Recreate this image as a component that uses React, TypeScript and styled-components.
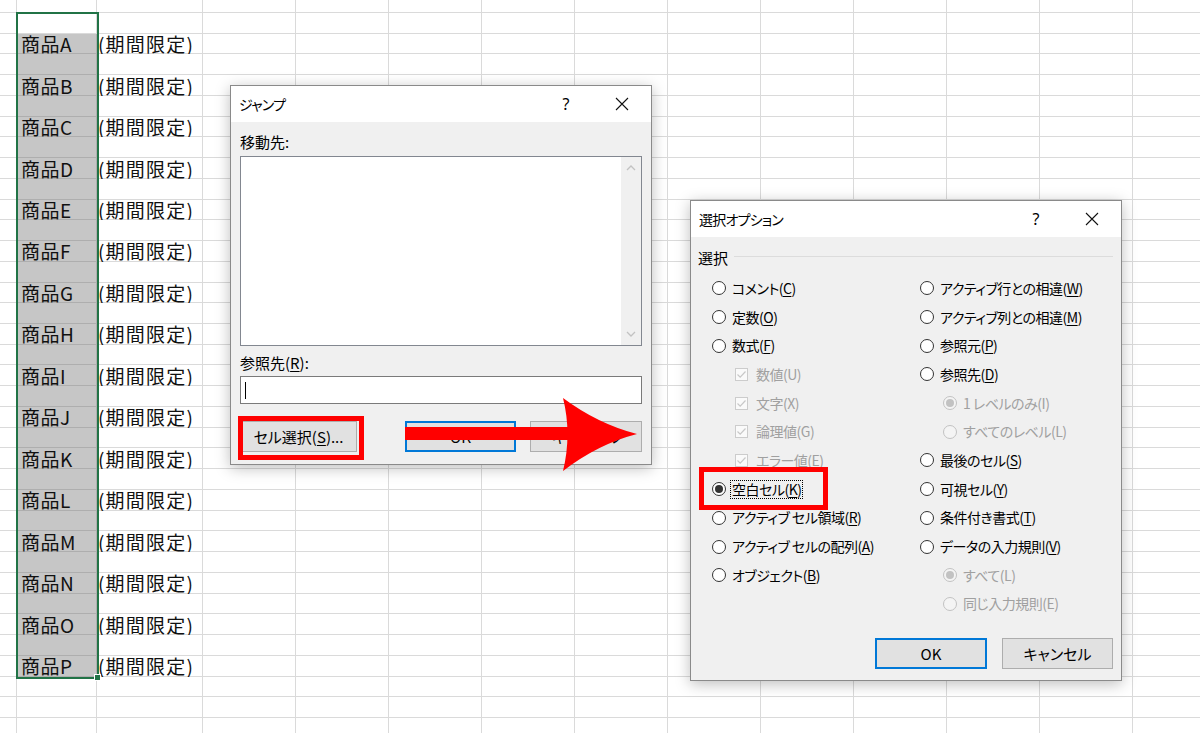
import React from "react";
import styled, { createGlobalStyle } from "styled-components";

const GlobalStyle = createGlobalStyle`
  html, body {
    margin: 0;
    padding: 0;
    background: #ffffff;
  }
  body {
    width: 1200px;
    height: 733px;
    overflow: hidden;
    font-family: "Noto Sans CJK JP", "Noto Sans", sans-serif;
  }
`;

const COLS = [17, 80, 106, 93, 93, 93, 93, 93, 93, 93, 93, 93, 93, 93];
const ROW_COUNT = 36;
const LETTERS = "ABCDEFGHIJKLMNOP".split("");

const Page = styled.div`
  position: relative;
  width: 1200px;
  height: 733px;
  overflow: hidden;
  background: #ffffff;
  font-family: "Noto Sans CJK JP", "Noto Sans", sans-serif;
`;

const Sheet = styled.div`
  display: grid;
  grid-template-columns: ${COLS.map((c) => `${c}px`).join(" ")};
  grid-template-rows: 13px repeat(${ROW_COUNT - 1}, 20.74px);
  width: 1200px;
  height: 733px;
  overflow: hidden;
`;

const SheetCell = styled.div<{ $selected?: boolean; $pad: number; $spacing: number }>`
  box-sizing: border-box;
  border-right: 1px solid ${(p) => (p.$selected ? "#aeaeae" : "#dadada")};
  border-bottom: 1px solid ${(p) => (p.$selected ? "#aeaeae" : "#dadada")};
  background: ${(p) => (p.$selected ? "#c6c6c6" : "#ffffff")};
  display: flex;
  align-items: center;
  padding-left: ${(p) => p.$pad}px;
  font-size: 19px;
  line-height: 19px;
  letter-spacing: ${(p) => p.$spacing}px;
  color: #111;
  white-space: nowrap;
  overflow: visible;
`;

const SelectionFrame = styled.div`
  position: absolute;
  left: 16px;
  top: 12px;
  width: 83px;
  height: 667px;
  box-sizing: border-box;
  border: 2px solid #217346;
  pointer-events: none;
`;

const FillHandle = styled.div`
  position: absolute;
  left: 94px;
  top: 674px;
  width: 7px;
  height: 7px;
  box-sizing: border-box;
  background: #217346;
  border: 1px solid #ffffff;
`;

const DialogWindow = styled.div<{ $left: number; $top: number; $width: number; $height: number }>`
  position: absolute;
  left: ${(p) => p.$left}px;
  top: ${(p) => p.$top}px;
  width: ${(p) => p.$width}px;
  height: ${(p) => p.$height}px;
  box-sizing: border-box;
  border: 1px solid #8a8a8a;
  background: #f0f0f0;
  box-shadow: 0 3px 14px rgba(0, 0, 0, 0.26);
  display: flex;
  flex-direction: column;
  font-size: 15px;
  color: #000;
  font-feature-settings: "palt" 1;
`;

const TitleBar = styled.div`
  flex: none;
  height: 36px;
  background: #ffffff;
  display: flex;
  align-items: center;
`;

const TitleText = styled.div`
  flex: 1;
  padding-left: 8px;
  font-size: 14px;
  letter-spacing: -0.8px;
`;

const HelpButton = styled.div`
  width: 54px;
  height: 100%;
  display: flex;
  align-items: center;
  justify-content: center;
  font-family: "Noto Sans", sans-serif;
  font-size: 16px;
`;

const CloseButton = styled.div`
  width: 58px;
  height: 100%;
  display: flex;
  align-items: center;
  justify-content: center;
`;

const JumpBody = styled.div`
  flex: 1;
  display: flex;
  flex-direction: column;
  padding: 10px 9px 0 9px;
`;

const FieldLabel = styled.div<{ $gap: number }>`
  height: 20px;
  line-height: 20px;
  margin-top: ${(p) => p.$gap}px;
`;

const Mnemonic = styled.u`
  text-decoration: underline;
  text-decoration-thickness: 1px;
  text-underline-offset: 2px;
`;

const ListBox = styled.div`
  margin-top: 4px;
  height: 190px;
  box-sizing: border-box;
  border: 1px solid #828790;
  background: #ffffff;
  display: flex;
  justify-content: flex-end;
`;

const ScrollTrack = styled.div`
  width: 20px;
  background: #f0f0f0;
  display: flex;
  flex-direction: column;
  justify-content: space-between;
  align-items: center;
  padding: 8px 0;
  box-sizing: border-box;
`;

const TextInput = styled.div`
  margin-top: 3px;
  height: 28px;
  box-sizing: border-box;
  border: 1px solid #7a7a7a;
  background: #ffffff;
  display: flex;
  align-items: center;
  padding-left: 4px;
`;

const Caret = styled.span`
  width: 1px;
  height: 17px;
  background: #000;
`;

const ButtonRow = styled.div<{ $gap: number }>`
  margin-top: ${(p) => p.$gap}px;
  display: flex;
  align-items: center;
  gap: 14px;
`;

const Spacer = styled.div`
  flex: 1;
`;

const DialogButton = styled.div<{ $width: number; $primary?: boolean }>`
  position: relative;
  width: ${(p) => p.$width}px;
  height: 31px;
  box-sizing: border-box;
  border: ${(p) => (p.$primary ? "2px solid #0078d7" : "1px solid #adadad")};
  background: #e1e1e1;
  display: flex;
  align-items: center;
  justify-content: center;
  font-size: 15px;
  white-space: nowrap;
`;

const AnnotationBox = styled.div<{ $left: number; $top: number; $width: number; $height: number }>`
  position: absolute;
  left: ${(p) => p.$left}px;
  top: ${(p) => p.$top}px;
  width: ${(p) => p.$width}px;
  height: ${(p) => p.$height}px;
  box-sizing: border-box;
  border: 5px solid #ff0000;
  pointer-events: none;
  z-index: 3;
`;

const OptionsBody = styled.div`
  flex: 1;
  display: flex;
  flex-direction: column;
  padding: 10px 8px 11px 0;
`;

const GroupHeader = styled.div`
  display: flex;
  align-items: center;
  height: 20px;
  padding-left: 7px;
  font-size: 15px;
`;

const GroupRule = styled.div`
  flex: 1;
  height: 1px;
  background: #dcdcdc;
  margin-left: 6px;
  margin-top: -2px;
`;

const OptionColumns = styled.div`
  margin-top: 7px;
  padding-left: 21px;
  display: grid;
  grid-template-columns: 208px 1fr;
`;

const OptionColumn = styled.div`
  display: flex;
  flex-direction: column;
`;

const OptionRow = styled.div<{ $indent: number; $disabled?: boolean }>`
  position: relative;
  height: 28.7px;
  display: flex;
  align-items: center;
  padding-left: ${(p) => p.$indent}px;
  color: ${(p) => (p.$disabled ? "#a0a0a0" : "#000")};
  white-space: nowrap;
`;

const RadioCircle = styled.span<{ $checked?: boolean; $disabled?: boolean }>`
  flex: none;
  width: 14px;
  height: 14px;
  box-sizing: border-box;
  border-radius: 50%;
  border: 1px solid ${(p) => (p.$disabled ? "#c2c2c2" : "#333333")};
  background: ${(p) => (p.$disabled ? "#f4f4f4" : "#ffffff")};
  display: flex;
  align-items: center;
  justify-content: center;
  margin-right: 4px;
  &::after {
    content: "";
    width: 8px;
    height: 8px;
    border-radius: 50%;
    background: ${(p) => (p.$checked ? (p.$disabled ? "#c2c2c2" : "#333333") : "transparent")};
  }
`;

const CheckSquare = styled.span`
  flex: none;
  width: 13px;
  height: 13px;
  box-sizing: border-box;
  border: 1px solid #cccccc;
  background: #fafafa;
  display: flex;
  align-items: center;
  justify-content: center;
  margin-right: 6px;
`;

const OptionLabel = styled.span<{ $focus?: boolean }>`
  display: inline-block;
  padding: 0 1px;
  font-size: 14px;
  letter-spacing: -0.5px;
  line-height: 17px;
  border: 1px ${(p) => (p.$focus ? "dotted #000" : "solid transparent")};
`;

const ArrowOverlay = styled.svg`
  position: absolute;
  left: 0;
  top: 0;
  width: 1200px;
  height: 733px;
  pointer-events: none;
  z-index: 5;
`;

const OptionsButtons = styled.div`
  margin-top: auto;
  display: flex;
  justify-content: flex-end;
  gap: 15px;
`;

function CloseGlyph() {
  return (
    <svg width="14" height="14" viewBox="0 0 14 14">
      <path d="M1 1 L13 13 M13 1 L1 13" stroke="#111" strokeWidth="1.1" fill="none" />
    </svg>
  );
}

function Chevron({ up }: { up?: boolean }) {
  return (
    <svg width="10" height="6" viewBox="0 0 10 6">
      <path
        d={up ? "M1 5 L5 1 L9 5" : "M1 1 L5 5 L9 1"}
        stroke="#c2c2c2"
        strokeWidth="1.3"
        fill="none"
      />
    </svg>
  );
}

function CheckMark() {
  return (
    <svg width="11" height="11" viewBox="0 0 11 11">
      <path d="M1.5 5.5 L4.2 8.2 L9.5 2.5" stroke="#c8c8c8" strokeWidth="1.2" fill="none" />
    </svg>
  );
}

type Opt = {
  text: string;
  key: string;
  kind: "radio" | "check";
  indent?: number;
  checked?: boolean;
  disabled?: boolean;
  focus?: boolean;
  annotate?: boolean;
};

const LEFT_OPTS: Opt[] = [
  { text: "コメント", key: "C", kind: "radio" },
  { text: "定数", key: "O", kind: "radio" },
  { text: "数式", key: "F", kind: "radio" },
  { text: "数値", key: "U", kind: "check", indent: 23, checked: true, disabled: true },
  { text: "文字", key: "X", kind: "check", indent: 23, checked: true, disabled: true },
  { text: "論理値", key: "G", kind: "check", indent: 23, checked: true, disabled: true },
  { text: "エラー値", key: "E", kind: "check", indent: 23, checked: true, disabled: true },
  { text: "空白セル", key: "K", kind: "radio", checked: true, focus: true, annotate: true },
  { text: "アクティブ セル領域", key: "R", kind: "radio" },
  { text: "アクティブ セルの配列", key: "A", kind: "radio" },
  { text: "オブジェクト", key: "B", kind: "radio" },
];

const RIGHT_OPTS: Opt[] = [
  { text: "アクティブ行との相違", key: "W", kind: "radio" },
  { text: "アクティブ列との相違", key: "M", kind: "radio" },
  { text: "参照元", key: "P", kind: "radio" },
  { text: "参照先", key: "D", kind: "radio" },
  { text: "1 レベルのみ", key: "I", kind: "radio", indent: 23, checked: true, disabled: true },
  { text: "すべてのレベル", key: "L", kind: "radio", indent: 23, disabled: true },
  { text: "最後のセル", key: "S", kind: "radio" },
  { text: "可視セル", key: "Y", kind: "radio" },
  { text: "条件付き書式", key: "T", kind: "radio" },
  { text: "データの入力規則", key: "V", kind: "radio" },
  { text: "すべて", key: "L", kind: "radio", indent: 23, checked: true, disabled: true },
  { text: "同じ入力規則", key: "E", kind: "radio", indent: 23, disabled: true },
];

function OptionItem({ o }: { o: Opt }) {
  return (
    <OptionRow $indent={o.indent ?? 0} $disabled={o.disabled}>
      {o.kind === "radio" ? (
        <RadioCircle $checked={o.checked} $disabled={o.disabled} />
      ) : (
        <CheckSquare>{o.checked && <CheckMark />}</CheckSquare>
      )}
      <OptionLabel $focus={o.focus}>
        {o.text}({o.disabled ? o.key : <Mnemonic>{o.key}</Mnemonic>})
      </OptionLabel>
      {o.annotate && <AnnotationBox $left={-13} $top={-8} $width={129} $height={43} />}
    </OptionRow>
  );
}

function SheetGrid() {
  const cells: React.ReactNode[] = [];
  for (let r = 0; r < ROW_COUNT; r++) {
    for (let c = 0; c < COLS.length; c++) {
      const selected = c === 1 && r >= 2 && r <= 32;
      const isItemRow = r >= 2 && r <= 32 && r % 2 === 0;
      let content = "";
      if (isItemRow && c === 1) content = `商品${LETTERS[(r - 2) / 2]}`;
      if (isItemRow && c === 2) content = "(期間限定)";
      cells.push(
        <SheetCell
          key={`${r}-${c}`}
          $selected={selected}
          $pad={c === 1 ? 4 : 1}
          $spacing={c === 2 ? 1.2 : 0.5}
        >
          {content}
        </SheetCell>
      );
    }
  }
  return <Sheet>{cells}</Sheet>;
}

export default function App() {
  return (
    <>
      <GlobalStyle />
      <Page>
        <SheetGrid />
        <SelectionFrame />
        <FillHandle />

        <DialogWindow $left={230} $top={85} $width={422} $height={380}>
          <TitleBar>
            <TitleText>ジャンプ</TitleText>
            <HelpButton>?</HelpButton>
            <CloseButton>
              <CloseGlyph />
            </CloseButton>
          </TitleBar>
          <JumpBody>
            <FieldLabel $gap={0}>移動先:</FieldLabel>
            <ListBox>
              <ScrollTrack>
                <Chevron up />
                <Chevron />
              </ScrollTrack>
            </ListBox>
            <FieldLabel $gap={7}>
              参照先(<Mnemonic>R</Mnemonic>):
            </FieldLabel>
            <TextInput>
              <Caret />
            </TextInput>
            <ButtonRow $gap={17}>
              <DialogButton $width={117}>
                セル選択(<Mnemonic>S</Mnemonic>)...
                <AnnotationBox $left={-3} $top={-6} $width={126} $height={44} />
              </DialogButton>
              <Spacer />
              <DialogButton $width={111} $primary>
                OK
              </DialogButton>
              <DialogButton $width={112}>キャンセル</DialogButton>
            </ButtonRow>
          </JumpBody>
        </DialogWindow>

        <DialogWindow $left={690} $top={200} $width={432} $height={481}>
          <TitleBar>
            <TitleText>選択オプション</TitleText>
            <HelpButton>?</HelpButton>
            <CloseButton>
              <CloseGlyph />
            </CloseButton>
          </TitleBar>
          <OptionsBody>
            <GroupHeader>
              選択
              <GroupRule />
            </GroupHeader>
            <OptionColumns>
              <OptionColumn>
                {LEFT_OPTS.map((o, i) => (
                  <OptionItem key={`l${i}`} o={o} />
                ))}
              </OptionColumn>
              <OptionColumn>
                {RIGHT_OPTS.map((o, i) => (
                  <OptionItem key={`r${i}`} o={o} />
                ))}
              </OptionColumn>
            </OptionColumns>
            <OptionsButtons>
              <DialogButton $width={112} $primary>
                OK
              </DialogButton>
              <DialogButton $width={111}>キャンセル</DialogButton>
            </OptionsButtons>
          </OptionsBody>
        </DialogWindow>

        <ArrowOverlay viewBox="0 0 1200 733">
          <rect x="405" y="427" width="164" height="13" fill="#ff0000" />
          <path d="M563 398 Q598 424 637 434 Q598 444 563 471 Q572 434 563 398 Z" fill="#ff0000" />
        </ArrowOverlay>
      </Page>
    </>
  );
}
